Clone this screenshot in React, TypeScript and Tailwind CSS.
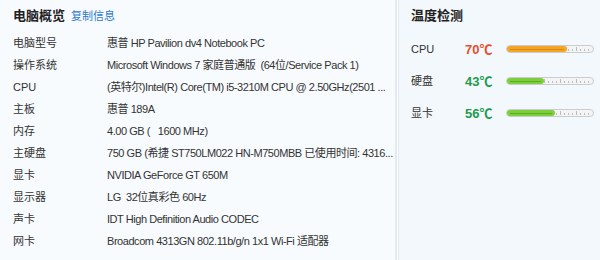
import React from 'react';

const rows: [string, string][] = [
  ['电脑型号', '惠普 HP Pavilion dv4 Notebook PC'],
  ['操作系统', 'Microsoft Windows 7 家庭普通版  (64位/Service Pack 1)'],
  ['CPU', '(英特尔)Intel(R) Core(TM) i5-3210M CPU @ 2.50GHz(2501 ...'],
  ['主板', '惠普 189A'],
  ['内存', '4.00 GB (   1600 MHz)'],
  ['主硬盘', '750 GB (希捷 ST750LM022 HN-M750MBB 已使用时间: 4316...'],
  ['显卡', 'NVIDIA GeForce GT 650M'],
  ['显示器', 'LG  32位真彩色 60Hz'],
  ['声卡', 'IDT High Definition Audio CODEC'],
  ['网卡', 'Broadcom 4313GN 802.11b/g/n 1x1 Wi-Fi 适配器'],
];

const temps = [
  { name: 'CPU', value: 70, color: 'text-[#e5502c]', fill: '#f5a623', dark: '#c77d0c' },
  { name: '硬盘', value: 43, color: 'text-[#1f9a4e]', fill: '#7ccf3a', dark: '#4e9e1c' },
  { name: '显卡', value: 56, color: 'text-[#1f9a4e]', fill: '#7ccf3a', dark: '#4e9e1c' },
];

function TempBar({ value, fill, dark }: { value: number; fill: string; dark: string }) {
  const w = 88;
  const fw = Math.round((w - 2) * value / 100);
  const ticks = [];
  for (let x = 6; x < w - 3; x += 4) ticks.push(x);
  return (
    <svg width={w} height={8} viewBox={`0 0 ${w} 8`}>
      <rect x={0.5} y={0.5} width={w - 1} height={7} rx={3.5} fill="#f4f4f4" stroke="#c9ccd0" />
      {ticks.map((x, i) => (
        <line key={i} x1={x + 0.5} x2={x + 0.5} y1={i % 4 === 0 ? 2 : 4} y2={6} stroke="#b8bcc2" strokeWidth={1} />
      ))}
      <rect x={1} y={1} width={fw} height={6} rx={3} fill={fill} />
      <rect x={4} y={4} width={fw - 6} height={1} fill={dark} opacity={0.7} />
    </svg>
  );
}

export default function App() {
  return (
    <div
      className="w-[600px] h-[260px] flex overflow-hidden text-[11px] text-[#333]"
      style={{ fontFamily: '"Liberation Sans", "Noto Sans CJK SC", sans-serif' }}
    >
      <div className="w-[395px] overflow-hidden bg-[#f8fbfe] pl-[13px] pt-[6px]">
        <div className="flex items-baseline gap-[6px] h-[20px]">
          <span className="text-[13px] font-bold text-[#222]">电脑概览</span>
          <span className="text-[11px] text-[#2b78d0]">复制信息</span>
        </div>
        <div className="mt-[6px]">
          {rows.map(([k, v]) => (
            <div key={k} className="flex items-center h-[22px]">
              <span className="w-[94px] shrink-0">{k}</span>
              <span className="whitespace-pre tracking-[-0.45px]">{v}</span>
            </div>
          ))}
        </div>
      </div>
      <div className="w-[2px] bg-[#e4eaf1]" />
      <div className="w-[1px] bg-[#ffffff]" />
      <div className="w-[1px] bg-[#e4eaf1]" />
      <div className="flex-1 bg-[#f3f8fc] pl-[12px] pt-[6px]">
        <div className="h-[20px] text-[13px] font-bold text-[#222]">温度检测</div>
        <div className="mt-[12px] flex flex-col gap-[10px]">
          {temps.map(t => (
            <div key={t.name} className="flex items-center h-[22px] leading-none">
              <span className="w-[54px]">{t.name}</span>
              <span className={`w-[41px] text-[13px] font-bold ${t.color}`}>{t.value}℃</span>
              <TempBar value={t.value} fill={t.fill} dark={t.dark} />
            </div>
          ))}
        </div>
      </div>
    </div>
  );
}
